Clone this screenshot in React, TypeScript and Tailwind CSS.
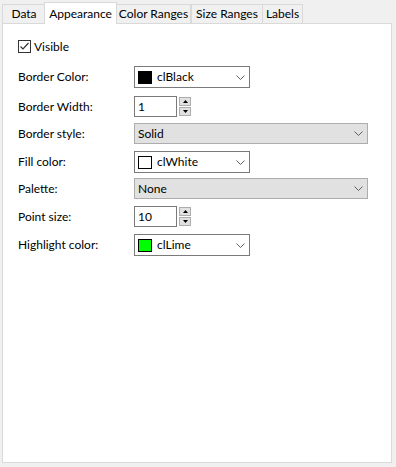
import React from "react";

const font = { fontFamily: 'Lato, "Noto Sans", sans-serif' };

function Chevron() {
  return (
    <svg width="9" height="5" viewBox="0 0 9 5" className="shrink-0">
      <path d="M0.5 0.5 L4.5 4.5 L8.5 0.5" fill="none" stroke="#606060" strokeWidth="1" />
    </svg>
  );
}

function ColorCombo({ color, name }: { color: string; name: string }) {
  return (
    <div className="flex h-[22px] w-[116px] items-center border border-[#7a7a7a] bg-white pl-[3px] pr-[4px]">
      <div className="h-[13px] w-[14px] border border-[#000]" style={{ backgroundColor: color }} />
      <span className="ml-[5px] flex-1 text-[12px] text-black">{name}</span>
      <Chevron />
    </div>
  );
}

function GrayCombo({ value }: { value: string }) {
  return (
    <div className="flex h-[21px] w-[234px] items-center border border-[#adadad] bg-[#e1e1e1] pl-[3px] pr-[4px]">
      <span className="flex-1 text-[12px] text-black">{value}</span>
      <Chevron />
    </div>
  );
}

function Spin({ value }: { value: string }) {
  return (
    <div className="flex h-[21px] items-center">
      <div className="flex h-[21px] w-[43px] items-center border border-[#7a7a7a] bg-white pl-[3px] text-[12px] text-black">
        {value}
      </div>
      <div className="ml-[2px] flex h-[19px] w-[12px] flex-col gap-[1px]">
        <div className="flex h-[9px] items-center justify-center border border-[#adadad] bg-[#e1e1e1]">
          <svg width="5" height="3" viewBox="0 0 5 3">
            <path d="M0 3 L2.5 0 L5 3 Z" fill="#000" />
          </svg>
        </div>
        <div className="flex h-[9px] items-center justify-center border border-[#adadad] bg-[#e1e1e1]">
          <svg width="5" height="3" viewBox="0 0 5 3">
            <path d="M0 0 L2.5 3 L5 0 Z" fill="#000" />
          </svg>
        </div>
      </div>
    </div>
  );
}

function Row({ label, children, mt }: { label: string; children: React.ReactNode; mt: string }) {
  return (
    <div className={`flex items-center ${mt}`}>
      <div className="w-[116px] text-[12px] text-black">{label}</div>
      {children}
    </div>
  );
}

function Tab({ label, w, selected }: { label: string; w: string; selected?: boolean }) {
  if (selected) {
    return (
      <div
        className={`relative z-10 -mb-px flex h-[22px] items-center justify-center whitespace-nowrap border border-b-0 border-[#d9d9d9] bg-white text-[12px] text-black ${w}`}
      >
        {label}
      </div>
    );
  }
  return (
    <div
      className={`flex h-[19px] items-center justify-center whitespace-nowrap border border-b-0 border-[#d9d9d9] bg-[#f0f0f0] text-[12px] text-black ${w}`}
    >
      {label}
    </div>
  );
}

export default function App() {
  return (
    <div className="h-[467px] w-[396px] bg-[#f0f0f0] pl-[2px] pt-[2px]" style={font}>
      <div className="flex h-[21px] items-end">
        <Tab label="Data" w="w-[43px] border-r-0 -mr-px" />
        <Tab label="Appearance" w="w-[73px]" selected />
        <Tab label="Color Ranges" w="w-[74px] border-l-0" />
        <Tab label="Size Ranges" w="w-[72px]" />
        <Tab label="Labels" w="w-[40px] border-l-0" />
      </div>
      <div className="h-[440px] w-[390px] border border-[#d9d9d9] bg-white pl-[15px] pt-[16px]">
        <div className="flex h-[13px] items-center">
          <div className="flex h-[13px] w-[13px] items-center justify-center border border-[#333] bg-white">
            <svg width="11" height="11" viewBox="0 0 11 11">
              <path d="M1.5 5.5 L4 8 L9.5 2" fill="none" stroke="#333" strokeWidth="1.2" />
            </svg>
          </div>
          <span className="ml-[3px] text-[12px] text-black">Visible</span>
        </div>
        <div className="flex flex-col">
          <Row label="Border Color:" mt="mt-[13px]">
            <ColorCombo color="#000000" name="clBlack" />
          </Row>
          <Row label="Border Width:" mt="mt-[8px]">
            <Spin value="1" />
          </Row>
          <Row label="Border style:" mt="mt-[6px]">
            <GrayCombo value="Solid" />
          </Row>
          <Row label="Fill color:" mt="mt-[7px]">
            <ColorCombo color="#ffffff" name="clWhite" />
          </Row>
          <Row label="Palette:" mt="mt-[5px]">
            <GrayCombo value="None" />
          </Row>
          <Row label="Point size:" mt="mt-[7px]">
            <Spin value="10" />
          </Row>
          <Row label="Highlight color:" mt="mt-[7px]">
            <ColorCombo color="#00ff00" name="clLime" />
          </Row>
        </div>
      </div>
    </div>
  );
}
